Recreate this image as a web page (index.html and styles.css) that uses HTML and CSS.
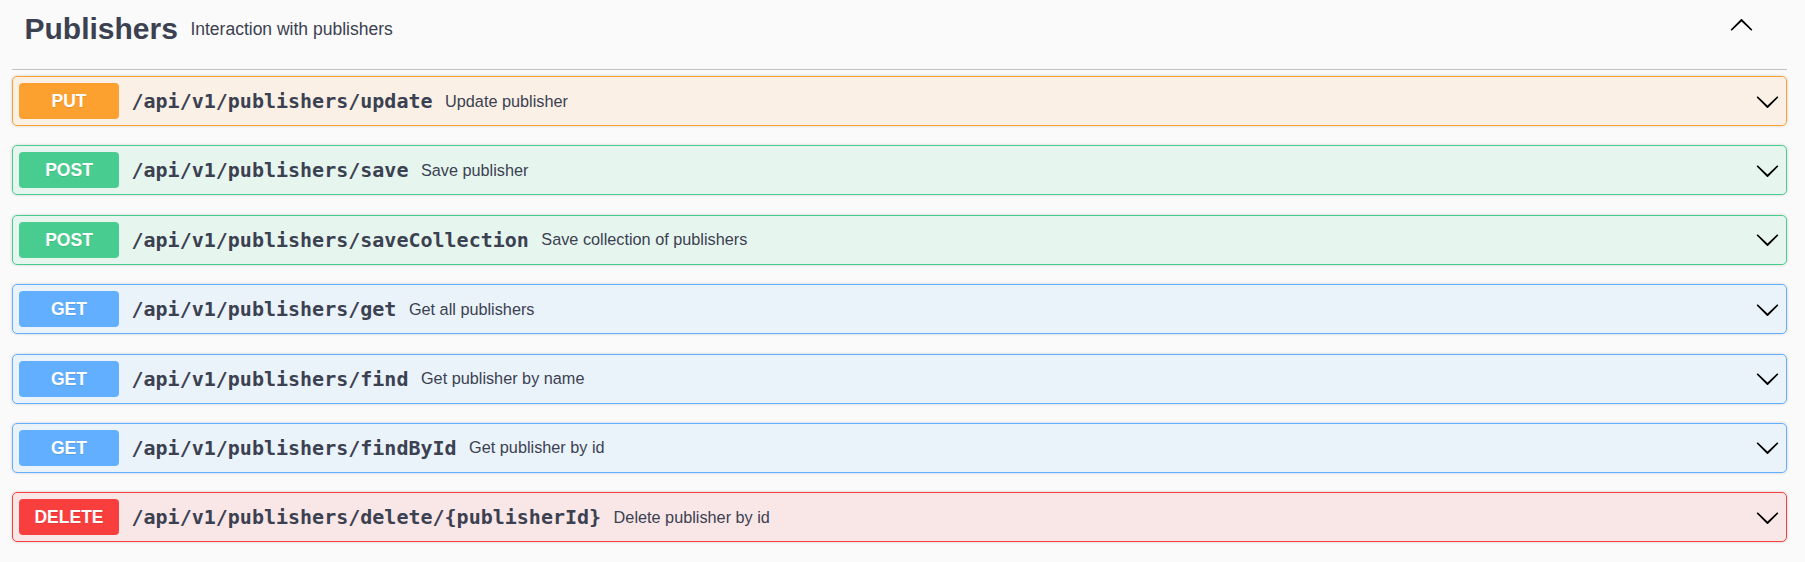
FILE: index.html
```html
<!DOCTYPE html>
<html lang="en">
<head>
<meta charset="utf-8">
<title>Publishers</title>
<link rel="stylesheet" href="styles.css">
</head>
<body>
<div class="tag-section">
  <h4 class="opblock-tag">
    <span class="tag-name">Publishers</span>
    <small class="tag-desc">Interaction with publishers</small>
    <button class="expand" type="button" aria-label="Collapse">
      <svg class="arrow up" viewBox="0 0 20 20" width="25" height="25"><path d="M17.418 6.109c.272-.268.709-.268.979 0s.271.701 0 .969l-7.908 7.83c-.27.268-.707.268-.979 0l-7.908-7.83c-.27-.268-.27-.701 0-.969.271-.268.709-.268.979 0L10 13.25l7.418-7.141z"/></svg>
    </button>
  </h4>

  <div class="opblock put">
    <div class="summary">
      <span class="method">PUT</span>
      <span class="path">/api/v1/publishers/update</span>
      <span class="desc">Update publisher</span>
      <svg class="arrow" viewBox="0 0 20 20" width="25" height="25"><path d="M17.418 6.109c.272-.268.709-.268.979 0s.271.701 0 .969l-7.908 7.83c-.27.268-.707.268-.979 0l-7.908-7.83c-.27-.268-.27-.701 0-.969.271-.268.709-.268.979 0L10 13.25l7.418-7.141z"/></svg>
    </div>
  </div>

  <div class="opblock post">
    <div class="summary">
      <span class="method">POST</span>
      <span class="path">/api/v1/publishers/save</span>
      <span class="desc">Save publisher</span>
      <svg class="arrow" viewBox="0 0 20 20" width="25" height="25"><path d="M17.418 6.109c.272-.268.709-.268.979 0s.271.701 0 .969l-7.908 7.83c-.27.268-.707.268-.979 0l-7.908-7.83c-.27-.268-.27-.701 0-.969.271-.268.709-.268.979 0L10 13.25l7.418-7.141z"/></svg>
    </div>
  </div>

  <div class="opblock post">
    <div class="summary">
      <span class="method">POST</span>
      <span class="path">/api/v1/publishers/saveCollection</span>
      <span class="desc">Save collection of publishers</span>
      <svg class="arrow" viewBox="0 0 20 20" width="25" height="25"><path d="M17.418 6.109c.272-.268.709-.268.979 0s.271.701 0 .969l-7.908 7.83c-.27.268-.707.268-.979 0l-7.908-7.83c-.27-.268-.27-.701 0-.969.271-.268.709-.268.979 0L10 13.25l7.418-7.141z"/></svg>
    </div>
  </div>

  <div class="opblock get">
    <div class="summary">
      <span class="method">GET</span>
      <span class="path">/api/v1/publishers/get</span>
      <span class="desc">Get all publishers</span>
      <svg class="arrow" viewBox="0 0 20 20" width="25" height="25"><path d="M17.418 6.109c.272-.268.709-.268.979 0s.271.701 0 .969l-7.908 7.83c-.27.268-.707.268-.979 0l-7.908-7.83c-.27-.268-.27-.701 0-.969.271-.268.709-.268.979 0L10 13.25l7.418-7.141z"/></svg>
    </div>
  </div>

  <div class="opblock get">
    <div class="summary">
      <span class="method">GET</span>
      <span class="path">/api/v1/publishers/find</span>
      <span class="desc">Get publisher by name</span>
      <svg class="arrow" viewBox="0 0 20 20" width="25" height="25"><path d="M17.418 6.109c.272-.268.709-.268.979 0s.271.701 0 .969l-7.908 7.83c-.27.268-.707.268-.979 0l-7.908-7.83c-.27-.268-.27-.701 0-.969.271-.268.709-.268.979 0L10 13.25l7.418-7.141z"/></svg>
    </div>
  </div>

  <div class="opblock get">
    <div class="summary">
      <span class="method">GET</span>
      <span class="path">/api/v1/publishers/findById</span>
      <span class="desc">Get publisher by id</span>
      <svg class="arrow" viewBox="0 0 20 20" width="25" height="25"><path d="M17.418 6.109c.272-.268.709-.268.979 0s.271.701 0 .969l-7.908 7.83c-.27.268-.707.268-.979 0l-7.908-7.83c-.27-.268-.27-.701 0-.969.271-.268.709-.268.979 0L10 13.25l7.418-7.141z"/></svg>
    </div>
  </div>

  <div class="opblock delete">
    <div class="summary">
      <span class="method">DELETE</span>
      <span class="path">/api/v1/publishers/delete/{publisherId}</span>
      <span class="desc">Delete publisher by id</span>
      <svg class="arrow" viewBox="0 0 20 20" width="25" height="25"><path d="M17.418 6.109c.272-.268.709-.268.979 0s.271.701 0 .969l-7.908 7.83c-.27.268-.707.268-.979 0l-7.908-7.83c-.27-.268-.27-.701 0-.969.271-.268.709-.268.979 0L10 13.25l7.418-7.141z"/></svg>
    </div>
  </div>
</div>
</body>
</html>
```

FILE: styles.css
```css
html, body {
  margin: 0;
  padding: 0;
  background: #fafafa;
}

body {
  font-family: "Liberation Sans", Arial, sans-serif;
  color: #3b4151;
}

.tag-section {
  width: 1775px;
  margin-left: 12px;
}

.opblock-tag {
  display: flex;
  align-items: center;
  margin: 0 0 6px 0;
  padding: 11.5px 33.5px 23.5px 12.5px;
  border-bottom: 1px solid rgba(59, 65, 81, 0.3);
  font-weight: 700;
}

.tag-name {
  font-size: 30px;
  line-height: 34px;
  color: #3b4151;
}

.tag-desc {
  flex: 1;
  font-size: 17.5px;
  line-height: 20px;
  font-weight: 400;
  padding: 0 12.5px;
  color: #3b4151;
}

.expand {
  display: flex;
  padding: 0;
  margin: 0 0 5.6px 0;
  border: none;
  background: none;
}

.arrow {
  display: block;
  flex: none;
  fill: #000;
}

.arrow.up {
  transform: scaleY(-1);
}

.opblock {
  margin: 0 0 19.4px 0;
  border: 1px solid #000;
  border-radius: 5px;
  box-shadow: 0 0 3px rgba(0, 0, 0, 0.19);
}

.summary {
  display: flex;
  align-items: center;
  padding: 6px;
}

.method {
  flex: none;
  min-width: 100px;
  height: 36px;
  line-height: 36px;
  text-align: center;
  border-radius: 4px;
  font-size: 17.5px;
  font-weight: 700;
  color: #fff;
  text-shadow: 0 1px 0 rgba(0, 0, 0, 0.1);
}

.path {
  flex: none;
  padding: 0 12.5px;
  font-family: "DejaVu Sans Mono", "Liberation Mono", monospace;
  font-size: 20px;
  font-weight: 700;
  color: #3b4151;
}

.desc {
  flex: 1 1 auto;
  font-size: 16.25px;
  color: #3b4151;
}

.put { background: rgba(252, 161, 48, 0.1); border-color: #fca130; }
.put .method { background: #fca130; }

.post { background: rgba(73, 204, 144, 0.1); border-color: #49cc90; }
.post .method { background: #49cc90; }

.get { background: rgba(97, 175, 254, 0.1); border-color: #61affe; }
.get .method { background: #61affe; }

.delete { background: rgba(249, 62, 62, 0.1); border-color: #f93e3e; }
.delete .method { background: #f93e3e; }
```
